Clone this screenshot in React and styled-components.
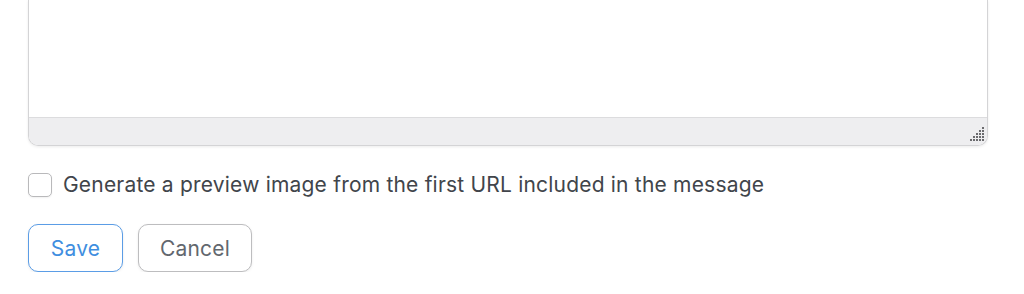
import React from "react";
import styled, {createGlobalStyle} from "styled-components";

const GlobalStyle = createGlobalStyle`
  *, *::before, *::after {
    box-sizing: border-box;
  }
  body {
    margin: 0;
    background: #ffffff;
    font-family: Inter, "Noto Sans", "Liberation Sans", sans-serif;
  }
`;

const Page = styled.div`
  padding: 0 36px 0 28px;
  display: flex;
  flex-direction: column;
`;

const Editor = styled.div`
  display: flex;
  flex-direction: column;
  border: 1px solid #d4d4d6;
  border-top: none;
  border-radius: 0 0 10px 10px;
  box-shadow: 0 1px 3px rgba(0, 0, 0, 0.08);
  overflow: hidden;
`;

const TextArea = styled.div`
  height: 118px;
  background: #ffffff;
  border-bottom: 1px solid #dcdcde;
`;

const EditorFooter = styled.div`
  height: 27px;
  background: #eeeef0;
  display: flex;
  justify-content: flex-end;
  align-items: flex-end;
  padding: 0 3px 4px 0;
`;

const CheckRow = styled.label`
  display: flex;
  align-items: center;
  gap: 11px;
  margin-top: 26px;
  font-size: 21px;
  color: #41454b;
  letter-spacing: 0.2px;
`;

const Box = styled.span`
  width: 24px;
  height: 24px;
  border: 1px solid #b9b9bb;
  border-radius: 5px;
  background: #ffffff;
  box-shadow: 0 1px 2px rgba(0, 0, 0, 0.06);
  flex-shrink: 0;
`;

const Actions = styled.div`
  display: flex;
  gap: 15px;
  margin-top: 27px;
`;

const Button = styled.button`
  height: 48px;
  width: ${(p) => (p.$primary ? "95px" : "114px")};
  padding: 0;
  border-radius: 10px;
  background: #ffffff;
  font-family: inherit;
  font-size: 21px;
  letter-spacing: 0.2px;
  border: 1.5px solid ${(p) => (p.$primary ? "#5b9de6" : "#bdbdbf")};
  color: ${(p) => (p.$primary ? "#3f8ee0" : "#62676e")};
  box-shadow: 0 1px 3px rgba(0, 0, 0, 0.08);
  cursor: pointer;
`;

const Grip = () => {
  const dots = [];
  for (let r = 0; r < 5; r++) {
    for (let c = 4 - r; c < 5; c++) {
      dots.push(<rect key={r + "-" + c} x={c * 3} y={r * 3} width="2" height="2" fill="#6b6b6e"/>);
    }
  }
  return (
    <svg width="14" height="14" viewBox="0 0 14 14">
      {dots}
    </svg>
  );
};

const App = () => {
  return (
    <Page>
      <GlobalStyle/>
      <Editor>
        <TextArea/>
        <EditorFooter>
          <Grip/>
        </EditorFooter>
      </Editor>
      <CheckRow>
        <Box/>
        Generate a preview image from the first URL included in the message
      </CheckRow>
      <Actions>
        <Button $primary>Save</Button>
        <Button>Cancel</Button>
      </Actions>
    </Page>
  );
};

export default App;
